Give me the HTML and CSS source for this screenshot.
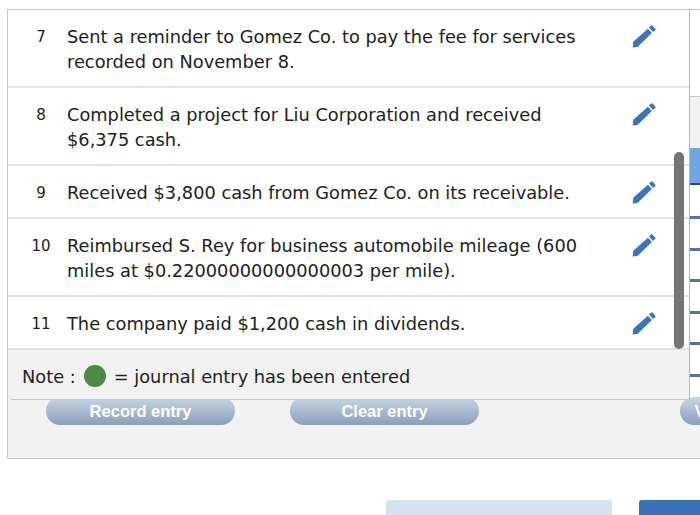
FILE: index.html
```html
<!DOCTYPE html>
<html lang="en">
<head>
    <meta charset="UTF-8">
    <meta name="viewport" content="width=device-width, initial-scale=1.0">
    <title>Transactions</title>
    <link rel="stylesheet" href="styles.css">
</head>
<body>
    <svg class="sprite" width="0" height="0">
        <symbol id="pencil" viewBox="0 0 24 24">
            <path d="M.7 22.6 1.3 16.7 15.9 3.7 19.9 8.1 5.5 22Z"/>
            <path d="M17 2.6 19 .5Q19.7-.1 20.4.5L23.3 3.7Q23.8 4.4 23.3 5L21 7Z"/>
        </symbol>
    </svg>

    <div class="panel">
        <!-- Journal pane behind the list -->
        <div class="top-area">
            <div class="side-pane">
                <div class="side-head"></div>
                <div class="side-tab"></div>
                <div class="side-lines">
                    <span></span><span></span><span></span><span></span><span></span><span></span>
                </div>
            </div>
        </div>

        <div class="button-row">
            <button class="pill-button">Record entry</button>
            <button class="pill-button">Clear entry</button>
            <button class="pill-button">View general journal</button>
        </div>

        <!-- Transaction list popup -->
        <div class="list-card">
            <div class="row row-tall">
                <div class="row-num">7</div>
                <div class="row-text">Sent a reminder to Gomez Co. to pay the fee for services recorded on November 8.</div>
                <svg class="edit-icon"><use href="#pencil"/></svg>
            </div>
            <div class="row row-tall">
                <div class="row-num">8</div>
                <div class="row-text">Completed a project for Liu Corporation and received $6,375 cash.</div>
                <svg class="edit-icon"><use href="#pencil"/></svg>
            </div>
            <div class="row">
                <div class="row-num">9</div>
                <div class="row-text">Received $3,800 cash from Gomez Co. on its receivable.</div>
                <svg class="edit-icon"><use href="#pencil"/></svg>
            </div>
            <div class="row row-tall">
                <div class="row-num">10</div>
                <div class="row-text">Reimbursed S. Rey for business automobile mileage (600 miles at $0.22000000000000003 per mile).</div>
                <svg class="edit-icon"><use href="#pencil"/></svg>
            </div>
            <div class="row">
                <div class="row-num">11</div>
                <div class="row-text">The company paid $1,200 cash in dividends.</div>
                <svg class="edit-icon"><use href="#pencil"/></svg>
            </div>
            <div class="note">
                <span>Note :</span>
                <span class="dot"></span>
                <span>= journal entry has been entered</span>
            </div>
            <div class="scroll-thumb"></div>
        </div>
    </div>

    <div class="footer-buttons">
        <div class="footer-light"></div>
        <div class="footer-dark"></div>
    </div>
</body>
</html>
```

FILE: styles.css
```css
/* General Styles */
html, body {
    height: 515px;
    overflow: hidden;
}

body {
    margin: 0;
    background-color: #fff;
    font-family: "DejaVu Sans", Verdana, sans-serif;
    color: #222;
}

.sprite {
    position: absolute;
}

.panel {
    position: relative;
    box-sizing: border-box;
    width: 760px;
    height: 450px;
    margin: 9px 0 0 7px;
    border: 1px solid #c8c8c8;
    background-color: #f2f2f2;
}

/* Pane behind the list */
.top-area {
    height: 387px;
    display: flex;
    justify-content: flex-end;
}

.side-pane {
    width: 77px;
    height: 389px;
    box-sizing: border-box;
    padding-top: 86px;
    background-color: #fff;
}

.side-head {
    height: 51px;
    border-top: 1px solid #ccc;
    background-color: #f2f2f2;
}

.side-tab {
    height: 35px;
    border-bottom: 2px solid #2c4d78;
    background-color: #6fa5e0;
}

.side-lines {
    display: flex;
    flex-direction: column;
    gap: 28.5px;
    padding-top: 31px;
}

.side-lines span {
    display: block;
    height: 3px;
    background-color: #4a76a8;
}

.button-row {
    display: flex;
    gap: 55px;
    padding-left: 38px;
}

.pill-button {
    flex: none;
    width: 189px;
    height: 28px;
    padding: 0;
    border: none;
    border-radius: 14px;
    background: linear-gradient(#c9d5e5, #8a9fbc);
    color: #fff;
    font-family: "Liberation Sans", Arial, sans-serif;
    font-size: 16.5px;
    font-weight: bold;
}

.pill-button:last-child {
    margin-left: 146px;
}

/* Transaction list */
.list-card {
    position: absolute;
    top: 0;
    left: 0;
    width: 681px;
    border-right: 1px solid #bbb;
    background-color: #fff;
    font-size: 17.8px;
    line-height: 25px;
}

.row {
    position: relative;
    display: flex;
    box-sizing: border-box;
    height: 53px;
    padding-top: 14px;
    border-bottom: 2px solid #e2e2e2;
}

.row-tall {
    height: 78px;
}

.row-num {
    flex: none;
    width: 52px;
    margin-left: 7px;
    padding-top: 1px;
    text-align: center;
    font-size: 15px;
}

.row-text {
    width: 520px;
}

.edit-icon {
    position: absolute;
    top: 15px;
    left: 624px;
    width: 24px;
    height: 24px;
    fill: #3a75bb;
}

.note {
    position: relative;
    box-sizing: border-box;
    height: 50px;
    display: flex;
    align-items: center;
    gap: 8px;
    padding: 2px 0 0 14px;
    background-color: #f2f2f2;
}

.note::after {
    content: "";
    position: absolute;
    left: 3px;
    right: 0;
    bottom: 0;
    height: 1px;
    background-color: #c4c4c4;
}

.dot {
    width: 22px;
    height: 22px;
    border-radius: 50%;
    background-color: #4a8a43;
}

.scroll-thumb {
    position: absolute;
    top: 142px;
    right: 5px;
    width: 10px;
    height: 197px;
    border-radius: 5px;
    background-color: #757575;
}

/* Footer buttons, cut off by the window */
.footer-buttons {
    display: flex;
    gap: 27px;
    margin: 41px 0 0 386px;
}

.footer-light,
.footer-dark {
    flex: none;
    height: 40px;
    border-radius: 3px;
}

.footer-light {
    width: 226px;
    background-color: #d6e2f0;
}

.footer-dark {
    width: 120px;
    background-color: #3a73b8;
}
```
